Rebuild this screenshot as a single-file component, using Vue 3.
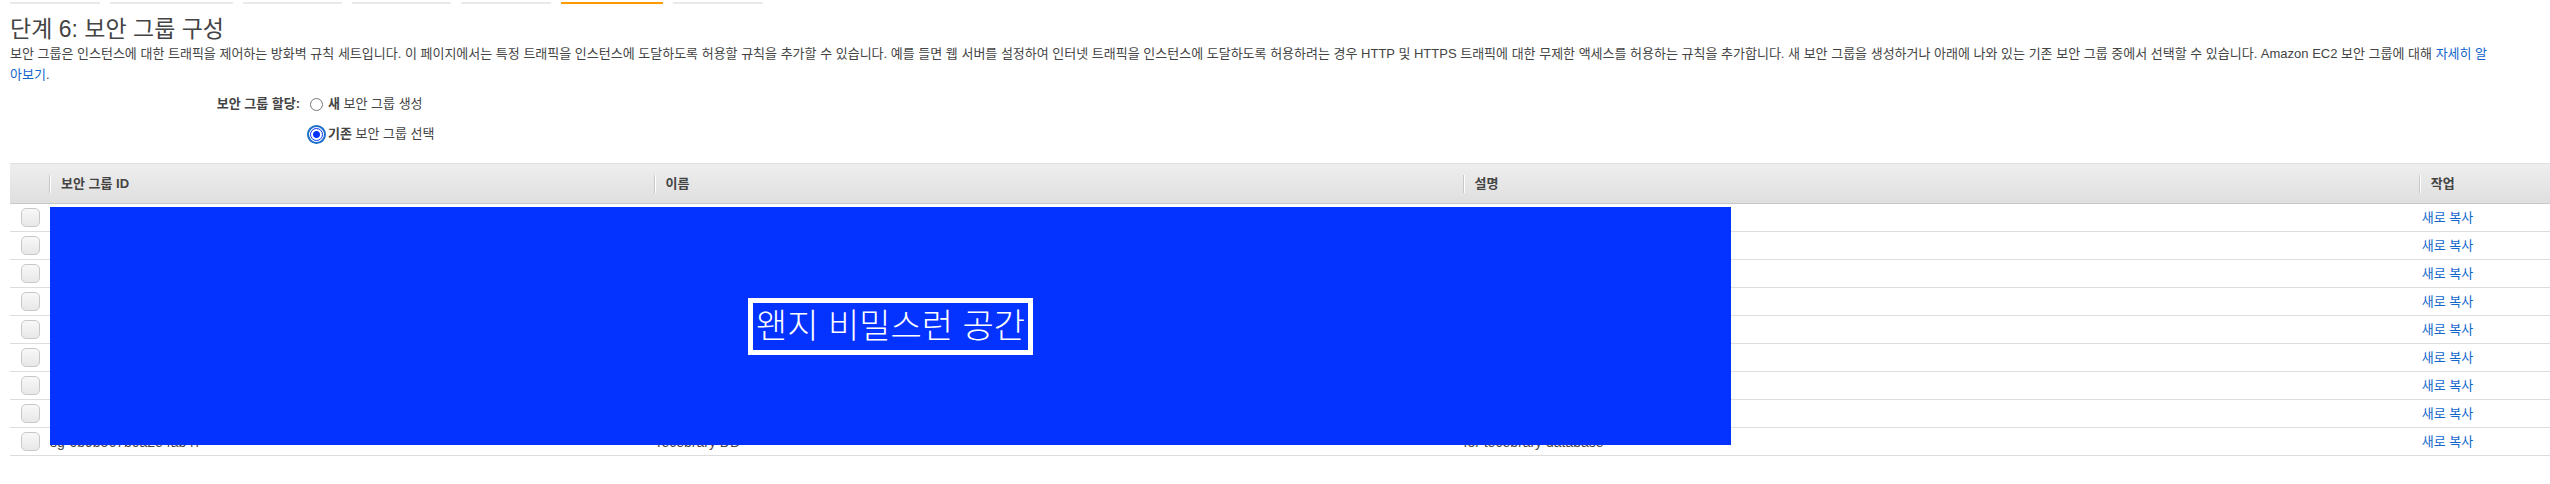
<script setup>
import { ref } from 'vue'

const steps = [
  { name: '1. AMI 선택', size: 'w1' },
  { name: '2. 인스턴스 유형 선택', size: 'w2' },
  { name: '3. 인스턴스 구성', size: 'w3' },
  { name: '4. 스토리지 추가', size: 'w4' },
  { name: '5. 태그 추가', size: 'w5' },
  { name: '6. 보안 그룹 구성', size: 'w6', current: true },
  { name: '7. 검토', size: 'w7' },
]
const assign = ref('existing')
const rows = Array.from({ length: 9 }, (_, i) =>
  i === 8
    ? { id: 'sg-0b9b567b0a2e4ab47', name: 'Tecebrary DB', desc: 'for tecebrary database' }
    : { id: '', name: '', desc: '' }
)
const picked = ref([])
</script>

<template>
  <main class="page">
    <ol class="steps">
      <li v-for="s in steps" :key="s.name" :class="[s.size, { current: s.current }]" :aria-label="s.name"></li>
    </ol>
    <h1>단계 6: 보안 그룹 구성</h1>
    <p class="intro">
      보안 그룹은 인스턴스에 대한 트래픽을 제어하는 방화벽 규칙 세트입니다. 이 페이지에서는 특정 트래픽을 인스턴스에 도달하도록 허용할 규칙을 추가할 수 있습니다. 예를 들면 웹 서버를 설정하여 인터넷 트래픽을 인스턴스에 도달하도록 허용하려는 경우 HTTP 및 HTTPS 트래픽에 대한 무제한 액세스를 허용하는 규칙을 추가합니다. 새 보안 그룹을 생성하거나 아래에 나와 있는 기존 보안 그룹 중에서 선택할 수 있습니다. Amazon EC2 보안 그룹에 대해
      <a href="#">자세히 알아보기</a>.
    </p>

    <div class="assign" role="radiogroup" aria-labelledby="assign-label">
      <span id="assign-label" class="assign-label">보안 그룹 할당:</span>
      <div class="options">
        <label><input v-model="assign" type="radio" name="assign" value="new" /><span><b>새</b> 보안 그룹 생성</span></label>
        <label><input v-model="assign" type="radio" name="assign" value="existing" /><span><b>기존</b> 보안 그룹 선택</span></label>
      </div>
    </div>

    <div class="table-wrap">
      <table>
        <colgroup>
          <col class="c-check" />
          <col class="c-id" />
          <col class="c-name" />
          <col class="c-desc" />
          <col class="c-act" />
        </colgroup>
        <thead>
          <tr>
            <th></th>
            <th><span>보안 그룹 ID</span></th>
            <th><span>이름</span></th>
            <th><span>설명</span></th>
            <th><span>작업</span></th>
          </tr>
        </thead>
        <tbody>
          <tr v-for="(r, i) in rows" :key="i">
            <td class="check"><input v-model="picked" type="checkbox" :value="i" :aria-label="'보안 그룹 ' + (i + 1)" /></td>
            <td class="value">{{ r.id }}</td>
            <td class="value">{{ r.name }}</td>
            <td class="value">{{ r.desc }}</td>
            <td class="action"><a href="#">새로 복사</a></td>
          </tr>
        </tbody>
      </table>
      <div class="cover"><span>왠지 비밀스런 공간</span></div>
    </div>
  </main>
</template>

<style>
body {
  background: #fff;
}
</style>

<style scoped>
.page {
  padding: 2px 0 0 10px;
  font: 13px/21px "Liberation Sans", "Noto Sans CJK KR", sans-serif;
  color: #444;
}
.steps {
  display: flex;
  gap: 10px;
  margin: 0;
  padding: 0;
  list-style: none;
}
.steps li {
  height: 2px;
  background: #eaeaea;
}
.steps .current {
  background: #f90;
}
.w1 { width: 90px; }
.w2 { width: 123px; }
.w3 { width: 99px; }
.w4 { width: 99px; }
.w5 { width: 90px; }
.w6 { width: 102px; }
.w7 { width: 90px; }
h1 {
  margin: 12px 0 0;
  font-size: 23px;
  line-height: 27px;
  font-weight: 400;
}
.intro {
  margin: 0 60px 0 0;
}
a {
  color: #1166cc;
  text-decoration: none;
}
.assign {
  display: flex;
  gap: 10px;
  margin-top: 4px;
  line-height: 30px;
}
.assign-label {
  width: 290px;
  text-align: right;
  font-weight: 700;
}
.options label {
  display: flex;
  align-items: center;
  gap: 5px;
}
.options input {
  appearance: none;
  box-sizing: border-box;
  width: 13px;
  height: 13px;
  margin: 0;
  border: 1px solid #767676;
  border-radius: 50%;
  background: #fff;
}
.options input:checked {
  border-color: #0433ff;
  background: radial-gradient(circle, #0433ff 3px, #fff 4px);
  outline: 2px solid #1b6ec8;
  outline-offset: 1px;
}
.table-wrap {
  position: relative;
  margin-top: 14px;
}
table {
  width: 100%;
  table-layout: fixed;
  border-collapse: separate;
  border-spacing: 0;
}
.c-check { width: 40px; }
.c-id { width: 23.8%; }
.c-name { width: 31.85%; }
.c-desc { width: 37.65%; }
th {
  height: 41px;
  box-sizing: border-box;
  padding: 0;
  border-top: 1px solid #e0e0e0;
  border-bottom: 1px solid #c8c8c8;
  background: linear-gradient(#eee, #dfdfdf);
  text-align: left;
}
th span {
  display: block;
  padding-left: 10px;
  border-left: 1px solid #fff;
  box-shadow: -1px 0 #c8c8c8;
  line-height: 18px;
}
td {
  box-sizing: border-box;
  height: 28px;
  padding: 0;
  border-bottom: 1px solid #ddd;
  line-height: 20px;
}
.value {
  font-size: 14px;
}
.action {
  padding-left: 2px;
}
.check input {
  appearance: none;
  box-sizing: border-box;
  display: block;
  width: 19px;
  height: 19px;
  margin: 0 0 0 11px;
  border: 1px solid #c8c8c8;
  border-radius: 5px;
  background: linear-gradient(#f8f8f8, #e8e8e8);
}
.cover {
  position: absolute;
  top: 44px;
  bottom: 11px;
  left: 40px;
  width: 1681px;
  display: flex;
  align-items: center;
  justify-content: center;
  background: #0433ff;
}
.cover span {
  padding: 0 3px;
  border: 5px solid #fff;
  color: #fff;
  font-size: 34px;
  line-height: 47px;
  font-weight: 300;
}
</style>
